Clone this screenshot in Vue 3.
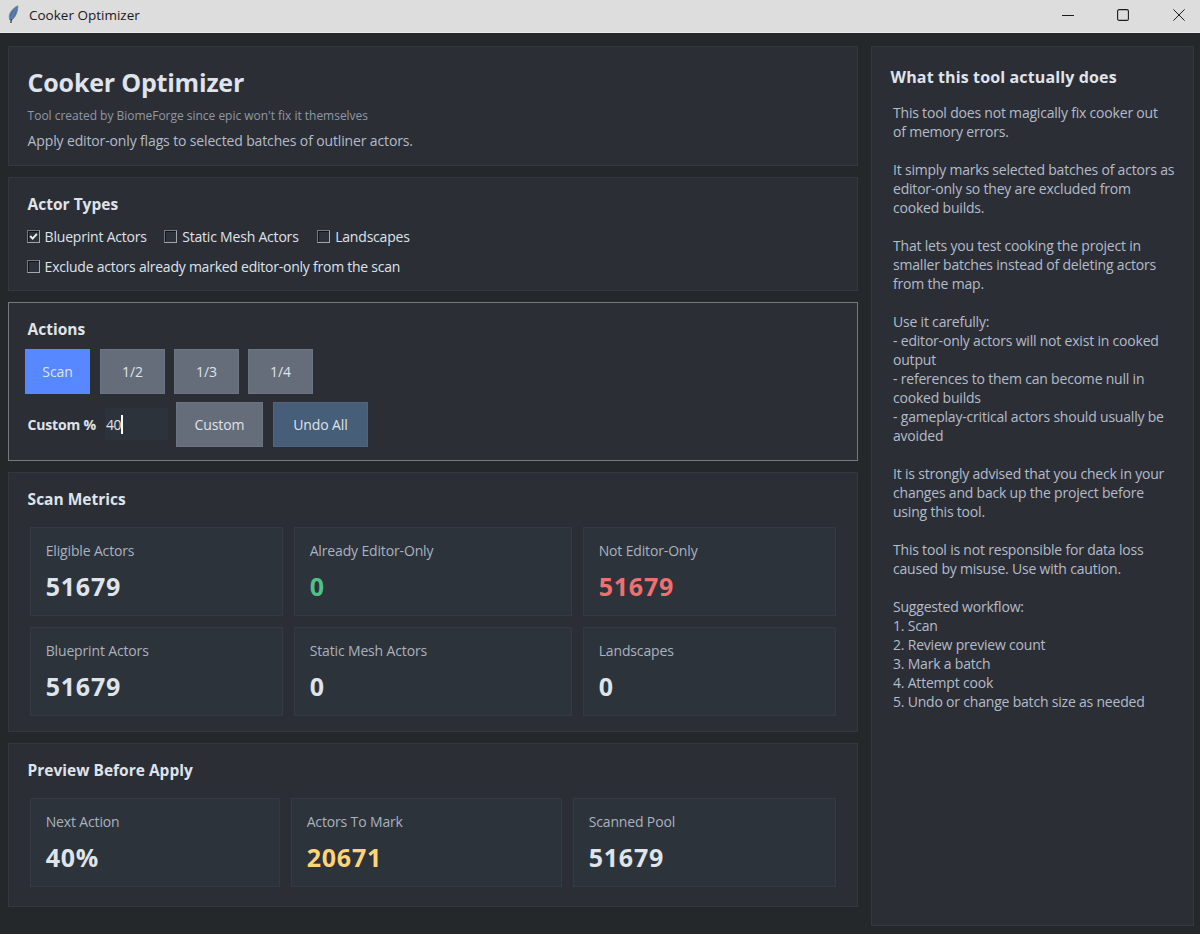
<script setup>
import { ref } from 'vue';

const actorTypes = ref([
    { id: 'blueprint', label: 'Blueprint Actors', checked: true },
    { id: 'mesh', label: 'Static Mesh Actors', checked: false },
    { id: 'landscape', label: 'Landscapes', checked: false }
]);
const excludeMarked = ref(false);
const customPercent = ref('40');

const fractions = ['1/2', '1/3', '1/4'];

const metrics = [
    { label: 'Eligible Actors', value: '51679' },
    { label: 'Already Editor-Only', value: '0', tone: 'green' },
    { label: 'Not Editor-Only', value: '51679', tone: 'red' },
    { label: 'Blueprint Actors', value: '51679' },
    { label: 'Static Mesh Actors', value: '0' },
    { label: 'Landscapes', value: '0' }
];

const preview = [
    { label: 'Next Action', value: '40%' },
    { label: 'Actors To Mark', value: '20671', tone: 'yellow' },
    { label: 'Scanned Pool', value: '51679' }
];

const helpLines = [
    'This tool does not magically fix cooker out',
    'of memory errors.',
    '',
    'It simply marks selected batches of actors as',
    'editor-only so they are excluded from',
    'cooked builds.',
    '',
    'That lets you test cooking the project in',
    'smaller batches instead of deleting actors',
    'from the map.',
    '',
    'Use it carefully:',
    '- editor-only actors will not exist in cooked',
    'output',
    '- references to them can become null in',
    'cooked builds',
    '- gameplay-critical actors should usually be',
    'avoided',
    '',
    'It is strongly advised that you check in your',
    'changes and back up the project before',
    'using this tool.',
    '',
    'This tool is not responsible for data loss',
    'caused by misuse. Use with caution.',
    '',
    'Suggested workflow:',
    '1. Scan',
    '2. Review preview count',
    '3. Mark a batch',
    '4. Attempt cook',
    '5. Undo or change batch size as needed'
];
</script>

<template>
    <div class="window">
        <header class="titlebar">
            <svg class="feather" width="12" height="20" viewBox="0 0 12 20">
                <path d="M9.9 0.8C6.4 2.4 2.2 6.2 1.4 10.4C1.1 12.2 1.4 13.8 2 15L4.4 14.6C7.6 11.6 9.9 7 9.9 0.8Z" fill="#4f74a8" stroke="#76808c" stroke-width="0.9" />
                <path d="M8.6 3.5C6 7 4.4 10.5 3.2 14" fill="none" stroke="#6f8fbd" stroke-width="0.7" />
                <path d="M3.3 14L2.9 18" fill="none" stroke="#2c2f33" stroke-width="1.2" />
            </svg>
            <span class="titlebar-text">Cooker Optimizer</span>
            <div class="window-controls">
                <svg width="12" height="12" viewBox="0 0 12 12"><path d="M0 6.5H12" stroke="#1c1c1c" /></svg>
                <svg width="12" height="12" viewBox="0 0 12 12"><rect x="0.6" y="0.6" width="10.8" height="10.8" rx="1.5" fill="none" stroke="#1c1c1c" stroke-width="1.1" /></svg>
                <svg width="12" height="12" viewBox="0 0 12 12"><path d="M0.4 0.4L11.6 11.6M11.6 0.4L0.4 11.6" stroke="#1c1c1c" stroke-width="1" /></svg>
            </div>
        </header>

        <div class="body">
            <main class="left">
                <section class="panel intro">
                    <h1>Cooker Optimizer</h1>
                    <p class="credit">Tool created by BiomeForge since epic won't fix it themselves</p>
                    <p class="lead">Apply editor-only flags to selected batches of outliner actors.</p>
                </section>

                <section class="panel types">
                    <h2>Actor Types</h2>
                    <div class="check-row">
                        <label v-for="t in actorTypes" :key="t.id" class="check" :class="t.id">
                            <input v-model="t.checked" type="checkbox">
                            <span class="box">
                                <svg v-if="t.checked" width="9" height="9" viewBox="0 0 9 9"><path d="M1.2 4L3.6 6.6L7.9 1.8" fill="none" stroke="#f0f2f5" stroke-width="1.9" /></svg>
                            </span>
                            <span class="check-text">{{ t.label }}</span>
                        </label>
                    </div>
                    <div class="check-row">
                        <label class="check exclude">
                            <input v-model="excludeMarked" type="checkbox">
                            <span class="box"></span>
                            <span class="check-text">Exclude actors already marked editor-only from the scan</span>
                        </label>
                    </div>
                </section>

                <section class="panel actions focused">
                    <h2>Actions</h2>
                    <div class="button-row">
                        <button class="btn primary">Scan</button>
                        <button v-for="f in fractions" :key="f" class="btn">{{ f }}</button>
                    </div>
                    <div class="custom-row">
                        <span class="custom-label">Custom %</span>
                        <!-- Entry with its insertion cursor -->
                        <div class="entry">{{ customPercent }}<i class="caret"></i></div>
                        <button class="btn custom">Custom</button>
                        <button class="btn undo">Undo All</button>
                    </div>
                </section>

                <section class="panel metrics">
                    <h2>Scan Metrics</h2>
                    <div class="cards metric-cards">
                        <div v-for="m in metrics" :key="m.label" class="card">
                            <span class="card-label">{{ m.label }}</span>
                            <strong class="card-value" :class="m.tone">{{ m.value }}</strong>
                        </div>
                    </div>
                </section>

                <section class="panel preview">
                    <h2>Preview Before Apply</h2>
                    <div class="cards preview-cards">
                        <div v-for="p in preview" :key="p.label" class="card">
                            <span class="card-label">{{ p.label }}</span>
                            <strong class="card-value" :class="p.tone">{{ p.value }}</strong>
                        </div>
                    </div>
                </section>
            </main>

            <aside class="panel help">
                <h3>What this tool actually does</h3>
                <div class="help-text">
                    <div v-for="(line, i) in helpLines" :key="i" class="help-line">{{ line }}</div>
                </div>
            </aside>
        </div>
    </div>
</template>

<style>
body {
    margin: 0;
    background: #24282b;
}
</style>

<style scoped>
.window {
    width: 1200px;
    height: 934px;
    overflow: hidden;
    display: flex;
    flex-direction: column;
    box-sizing: border-box;
    background: #24282b;
    color: #dfe3ea;
    font-family: "Open Sans", "Noto Sans", sans-serif;
    font-size: 14px;
    line-height: 19px;
    letter-spacing: -0.2px;
}

.window * {
    box-sizing: border-box;
}

h1,
h2,
h3,
p {
    margin: 0;
    white-space: nowrap;
}

.titlebar {
    height: 33px;
    flex-shrink: 0;
    display: flex;
    align-items: center;
    padding: 0 15px 2px 8px;
    background: #dddddd;
    border-bottom: 1px solid #e9e9e9;
    color: #1a1a1a;
}

.feather {
    margin-top: -1px;
}

.titlebar-text {
    margin: 1px 0 0 9px;
    font-size: 13.5px;
    letter-spacing: 0;
}

.window-controls {
    margin-left: auto;
    display: flex;
    gap: 44px;
}

.window-controls svg {
    display: block;
}

.window-controls svg:first-child {
    margin-right: -1px;
}

.body {
    flex: 1;
    display: flex;
    gap: 13px;
    padding: 13px 6px 8px 8px;
}

.left {
    width: 850px;
    display: flex;
    flex-direction: column;
    gap: 11px;
}

.panel {
    background: #2c2e36;
    border: 1px solid #333942;
    padding-left: 18.6px;
}

.panel.focused {
    border-color: #777a7d;
}

.intro {
    height: 120px;
    padding-top: 17px;
}

h1 {
    font-size: 25px;
    line-height: 36px;
    font-weight: 700;
    letter-spacing: -0.2px;
}

.credit {
    margin-top: 7px;
    font-size: 12px;
    line-height: 17px;
    letter-spacing: -0.02px;
    color: #8f98a5;
}

.lead {
    margin-top: 7px;
    letter-spacing: -0.14px;
    color: #b3bcc9;
}

h2 {
    font-size: 15.5px;
    line-height: 21px;
    font-weight: 700;
    letter-spacing: 0;
}

.types {
    height: 114px;
    padding-top: 16px;
}

.check-row {
    display: flex;
    height: 19px;
    margin-top: 12px;
}

.check-row + .check-row {
    margin-top: 11px;
}

.check {
    display: flex;
    align-items: center;
    gap: 5px;
    margin-left: -1px;
    white-space: nowrap;
}

.check input {
    display: none;
}

.check.blueprint {
    width: 137.6px;
}

.check.mesh {
    width: 153px;
    margin-left: 0;
}

.check.landscape {
    margin-left: 0;
}

.exclude {
    letter-spacing: -0.24px;
}

.box {
    width: 13px;
    height: 13px;
    display: flex;
    align-items: center;
    justify-content: center;
    background: #2d333b;
    border: 1px solid;
    border-color: #767a80 #a4a7ab #a4a7ab #767a80;
    box-shadow: inset 1px 1px 0 #101317;
}

.actions {
    height: 159px;
    padding-top: 16px;
}

.button-row {
    display: flex;
    gap: 9px;
    margin: 9px 0 0 -2.6px;
}

.btn {
    width: 65px;
    height: 45px;
    padding: 0 0 1px;
    border: 1px solid #6b7482;
    border-radius: 0;
    background: #656d7b;
    color: #dfe3ea;
    font: inherit;
    letter-spacing: -0.1px;
}

.btn.primary {
    margin-right: 1px;
    background: #5888ff;
    border-color: #5888ff;
}

.btn.custom {
    width: 87px;
    margin-left: 8px;
}

.btn.undo {
    width: 95px;
    margin-left: 10px;
    background: #475e79;
    border-color: #4b6684;
}

.custom-row {
    display: flex;
    align-items: center;
    margin-top: 8px;
}

.custom-label {
    width: 77.4px;
    padding-bottom: 1px;
    font-weight: 700;
    white-space: nowrap;
}

.entry {
    width: 63px;
    height: 32px;
    display: flex;
    align-items: center;
    margin-bottom: 1px;
    padding-left: 1px;
    background: #2d333b;
    letter-spacing: -0.4px;
}

.caret {
    width: 1.5px;
    height: 19px;
    background: #ffffff;
}

.metrics {
    height: 260px;
    padding-top: 16px;
}

.cards {
    display: grid;
    gap: 11px;
    margin: 17px 0 0 2.4px;
}

.metric-cards {
    grid-template-columns: 253px 278px 253px;
}

.preview-cards {
    grid-template-columns: 250px 271px 263px;
}

.card {
    height: 89px;
    display: flex;
    flex-direction: column;
    padding: 13px 0 0 14.7px;
    background: #2d333b;
    border: 1px solid #343a43;
}

.card-label {
    letter-spacing: -0.15px;
    color: #a9b2bf;
}

.card-value {
    margin-top: 9px;
    font-size: 25px;
    line-height: 34px;
    letter-spacing: 0.8px;
}

.green {
    color: #4ec287;
}

.red {
    color: #f1706f;
}

.yellow {
    color: #ffd479;
}

.preview {
    height: 164px;
    padding-top: 16px;
}

.help {
    flex: 1;
    height: 880px;
    padding-top: 19px;
}

.help h3 {
    font-size: 16px;
    line-height: 22px;
    font-weight: 700;
    letter-spacing: 0.13px;
}

.help-text {
    margin: 15px 0 0 2.4px;
    color: #b3bcc9;
}

.help-line {
    height: 19px;
    white-space: nowrap;
}
</style>
